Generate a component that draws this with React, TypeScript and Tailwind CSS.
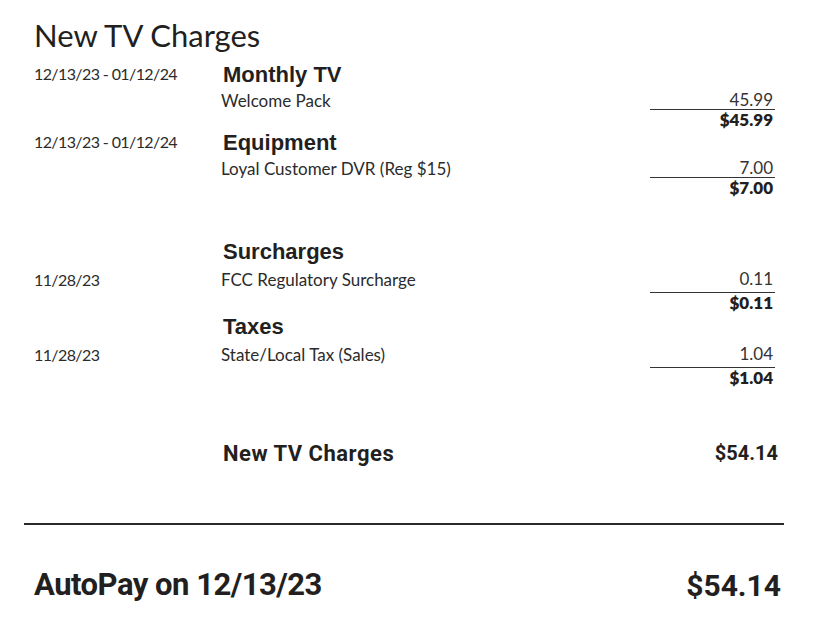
type Section = {
  date: string;
  dateOnItem?: boolean;
  heading: string;
  item: string;
  amount: string;
  total: string;
  top: string;
  rowH: string;
  pad: string;
};

const sections: Section[] = [
  {
    date: "12/13/23 - 01/12/24",
    heading: "Monthly TV",
    item: "Welcome Pack",
    amount: "45.99",
    total: "$45.99",
    top: "mt-[6px]",
    rowH: "h-[23px]",
    pad: "pb-0",
  },
  {
    date: "12/13/23 - 01/12/24",
    heading: "Equipment",
    item: "Loyal Customer DVR (Reg $15)",
    amount: "7.00",
    total: "$7.00",
    top: "mt-0",
    rowH: "h-[23px]",
    pad: "pb-0",
  },
  {
    date: "11/28/23",
    dateOnItem: true,
    heading: "Surcharges",
    item: "FCC Regulatory Surcharge",
    amount: "0.11",
    total: "$0.11",
    top: "mt-[41px]",
    rowH: "h-[29px]",
    pad: "pb-[4px]",
  },
  {
    date: "11/28/23",
    dateOnItem: true,
    heading: "Taxes",
    item: "State/Local Tax (Sales)",
    amount: "1.04",
    total: "$1.04",
    top: "mt-[1px]",
    rowH: "h-[29px]",
    pad: "pb-[4px]",
  },
];

const body = "font-['Lato','Open_Sans',sans-serif]";
const head = "font-['Liberation_Sans',Arial,sans-serif]";
const narrow = "font-['Roboto',sans-serif]";
const dateText = `text-[16px] tracking-[-0.6px] text-[#2b2b2b] ${body}`;

function ChargeSection({ s }: { s: Section }) {
  return (
    <div className={s.top}>
      <div className="flex h-[26px] items-center">
        <div className={`w-[221px] shrink-0 pl-[34px] ${dateText}`}>
          {s.dateOnItem ? "" : s.date}
        </div>
        <div className={`pl-[2px] text-[22px] font-bold text-[#231f20] ${head}`}>
          {s.heading}
        </div>
      </div>
      <div className={`flex ${s.rowH}`}>
        <div className={`flex w-[221px] shrink-0 items-end pl-[34px] leading-[18px] ${s.pad} ${dateText}`}>
          {s.dateOnItem ? s.date : ""}
        </div>
        <div className={`flex flex-1 items-end text-[17px] leading-[18px] text-[#2b2b2b] ${s.pad} ${body}`}>
          {s.item}
        </div>
        <div className={`flex w-[125px] shrink-0 items-end justify-end border-b border-[#333] pr-[2px] text-[17px] leading-[18px] text-[#333] ${s.pad} ${body}`}>
          {s.amount}
        </div>
      </div>
      <div className="flex h-[19px] items-center justify-end pr-[2px]">
        <span className={`text-[17px] font-extrabold text-[#231f20] ${body}`}>{s.total}</span>
      </div>
    </div>
  );
}

export default function App() {
  return (
    <div className="h-[630px] w-[815px] overflow-hidden bg-white pr-[40px]">
      <div className="flex h-[55px] items-end pl-[34px]">
        <h1 className={`text-[31px] leading-[40px] text-[#231f20] ${body}`}>New TV Charges</h1>
      </div>
      {sections.map((s) => (
        <ChargeSection key={s.heading} s={s} />
      ))}
      <div className="mt-[53px] flex h-[26px] items-center">
        <div className="w-[223px] shrink-0" />
        <div className={`flex-1 text-[22px] font-bold tracking-[0.5px] text-[#231f20] ${narrow}`}>
          New TV Charges
        </div>
        <div className={`-mr-[3px] text-[20px] font-bold text-[#231f20] ${narrow}`}>$54.14</div>
      </div>
      <div className="ml-[24px] mt-[57px] h-[2px] w-[760px] bg-[#2a2a2a]" />
      <div className="mt-[40px] flex h-[40px] items-center justify-between pl-[34px]">
        <span className={`text-[31px] font-bold tracking-[-0.5px] text-[#231f20] ${narrow}`}>
          AutoPay on 12/13/23
        </span>
        <span className={`-mr-[6px] text-[30px] font-bold text-[#231f20] ${narrow}`}>$54.14</span>
      </div>
    </div>
  );
}
